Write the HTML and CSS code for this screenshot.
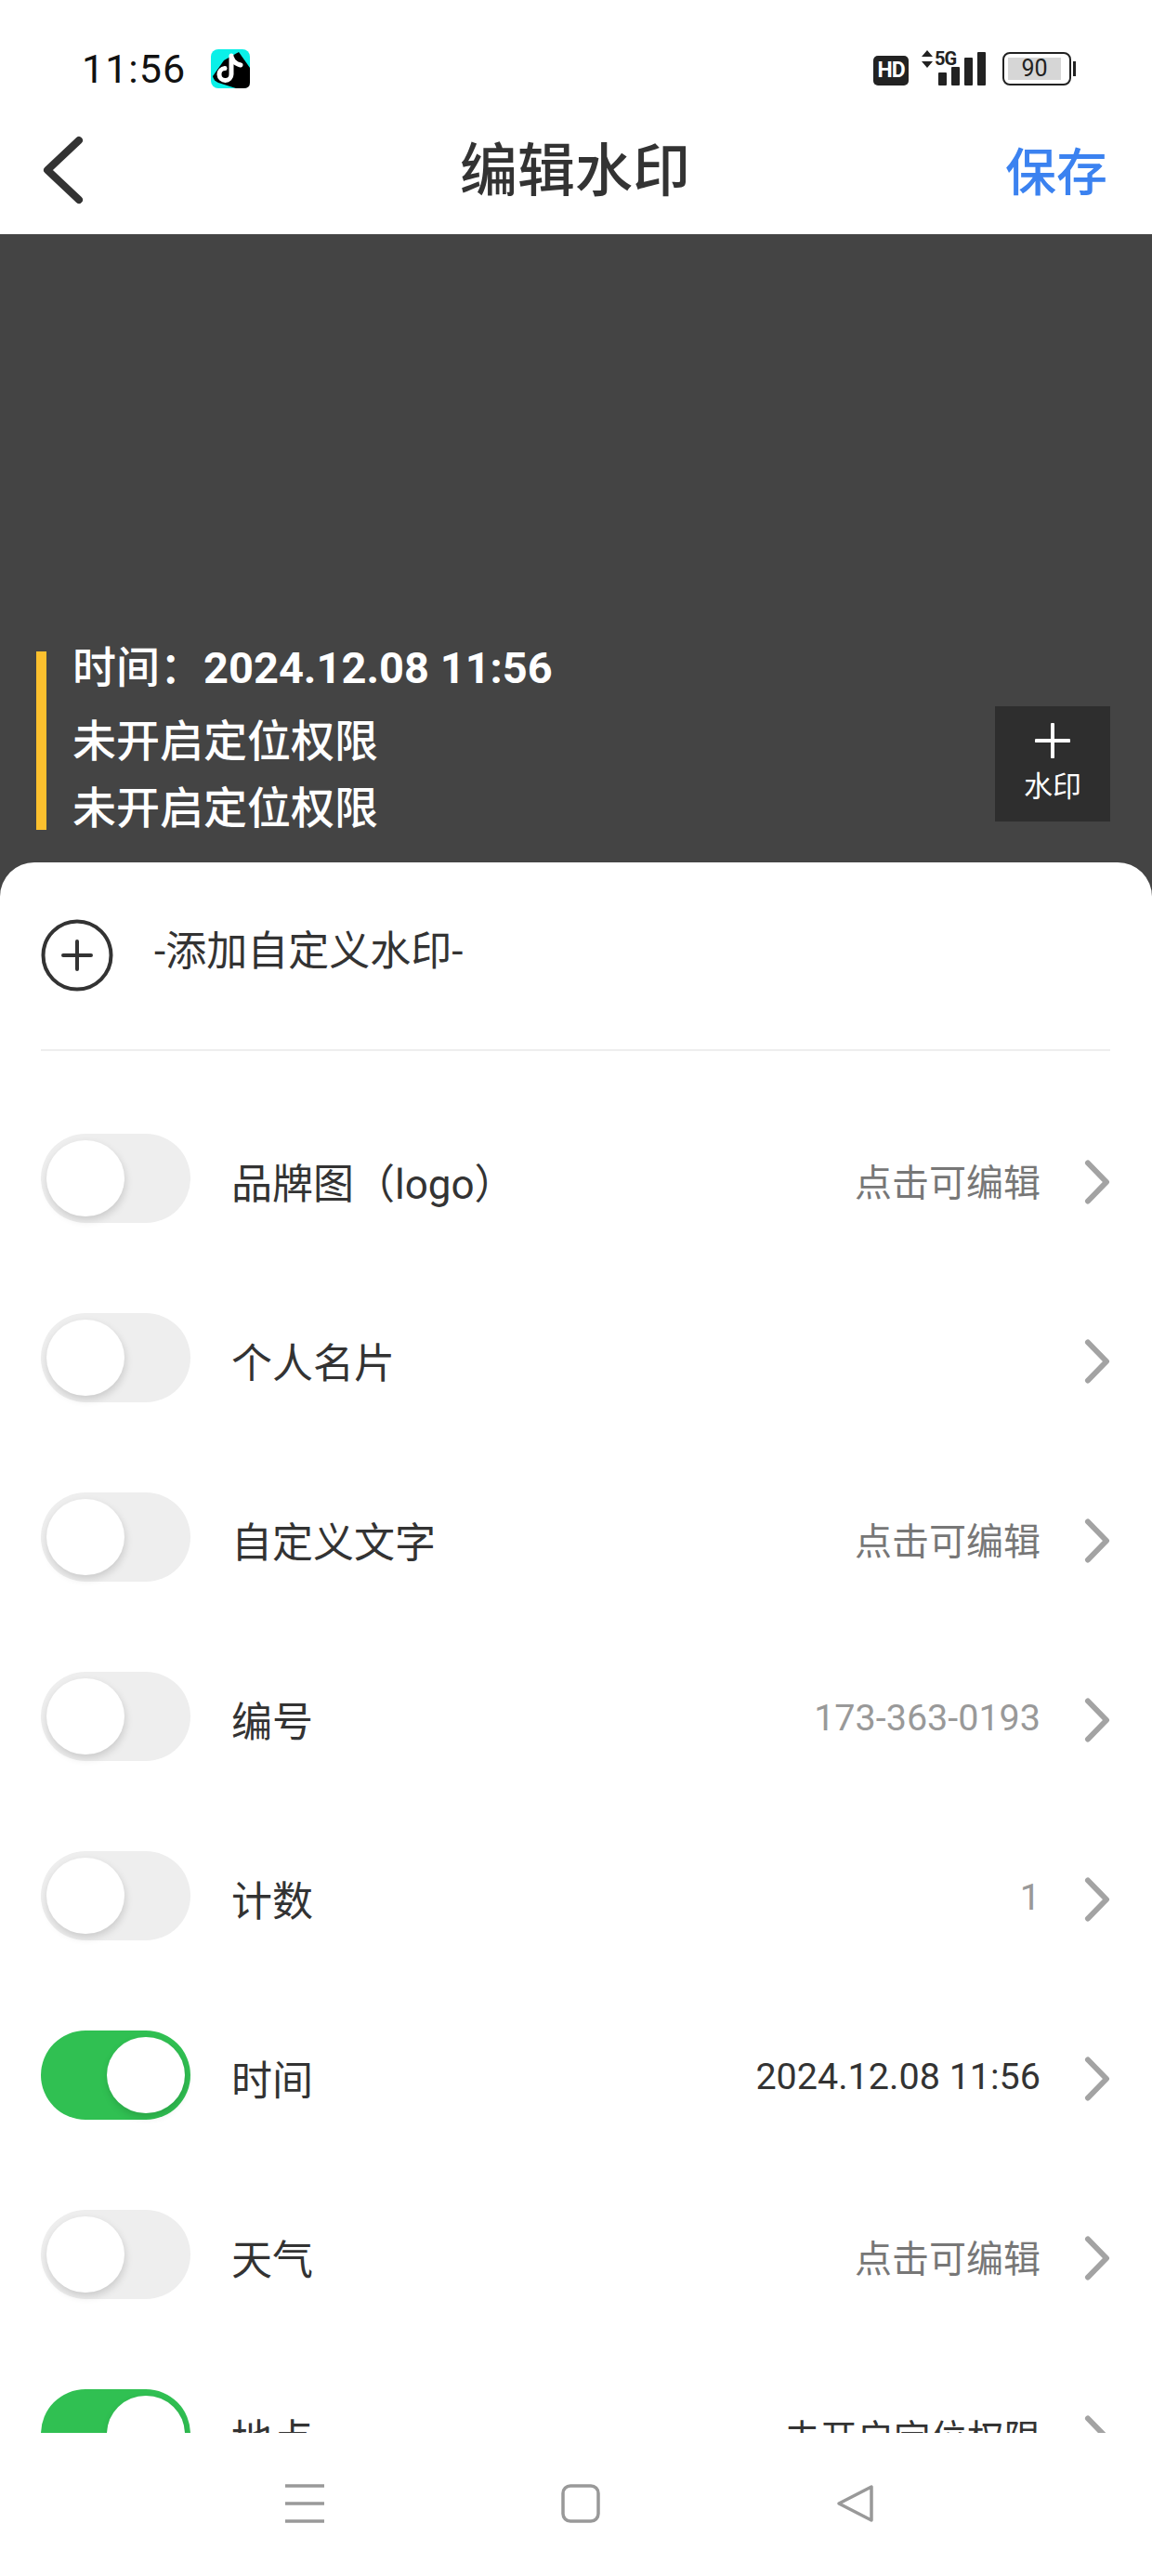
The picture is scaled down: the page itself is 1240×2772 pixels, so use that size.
FILE: index.html
```html
<!DOCTYPE html>
<html lang="zh-CN">

<head>
    <meta charset="UTF-8">
    <meta name="viewport" content="width=device-width, initial-scale=1.0">
    <title>编辑水印</title>
    <link rel="stylesheet" href="styles.css">
</head>

<body>
    <svg class="defs" width="0" height="0">
        <symbol id="chevron" viewBox="0 0 28 48">
            <path d="M4 3.5 L24 24 L4 44.5" fill="none" stroke="#a3a3a3" stroke-width="6" stroke-linecap="round" stroke-linejoin="round" />
        </symbol>
    </svg>

    <div class="phone">
        <div class="status">
            <span class="clock">11:56</span>
            <svg class="app-icon" width="42" height="42" viewBox="0 0 42 42">
                <rect width="42" height="42" rx="8" fill="#0bf0e8" />
                <path d="M2 29 L14 12 L30 3 L42 20 V36 Q42 42 35 42 H27 L8 36 Q3 34 2 29 Z" fill="#000" />
                <path d="M22 7 V27 A6.5 6.5 0 1 1 15 20.5 M22 8 Q24 15 32 17" fill="none" stroke="#fff" stroke-width="5" stroke-linecap="round" />
            </svg>
            <div class="status-right">
                <span class="hd">HD</span>
                <div class="signal">
                    <svg class="arrows" width="14" height="19" viewBox="0 0 14 19">
                        <path d="M7 0 L13 7 H1 Z M1 12 H13 L7 19 Z" fill="#222" />
                    </svg>
                    <span class="five-g">5G</span>
                    <span class="bar bar-1"></span>
                    <span class="bar bar-2"></span>
                    <span class="bar bar-3"></span>
                    <span class="bar bar-4"></span>
                </div>
                <div class="battery">
                    <div class="battery-body">
                        <span class="battery-fill">90</span>
                    </div>
                    <span class="battery-nub"></span>
                </div>
            </div>
        </div>

        <div class="header">
            <svg class="back" width="44" height="74" viewBox="0 0 44 74">
                <path d="M39 5 L5 37 L39 69" fill="none" stroke="#333" stroke-width="8" stroke-linecap="round" stroke-linejoin="round" />
            </svg>
            <h1 class="title">编辑水印</h1>
            <a class="save">保存</a>
        </div>

        <div class="preview">
            <div class="stamp">
                <p class="stamp-line"><span>时间：</span><b>2024.12.08 11:56</b></p>
                <p class="stamp-line">未开启定位权限</p>
                <p class="stamp-line">未开启定位权限</p>
            </div>
            <div class="add-stamp">
                <svg width="38" height="38" viewBox="0 0 38 38">
                    <path d="M19 1.5 V36.5 M1.5 19 H36.5" stroke="#fff" stroke-width="4" stroke-linecap="round" />
                </svg>
                <span>水印</span>
            </div>
        </div>

        <div class="sheet">
            <div class="custom">
                <svg width="78" height="78" viewBox="0 0 78 78">
                    <circle cx="39" cy="39" r="36.5" fill="none" stroke="#333" stroke-width="4" />
                    <path d="M39 24 V54 M24 39 H54" stroke="#333" stroke-width="4" stroke-linecap="round" />
                </svg>
                <span>-添加自定义水印-</span>
            </div>

            <div class="list">
                <div class="row">
                    <div class="toggle"><span class="knob"></span></div>
                    <span class="label">品牌图（logo）</span>
                    <span class="value hint">点击可编辑</span>
                    <svg class="chevron"><use href="#chevron" /></svg>
                </div>
                <div class="row">
                    <div class="toggle"><span class="knob"></span></div>
                    <span class="label">个人名片</span>
                    <span class="value"></span>
                    <svg class="chevron"><use href="#chevron" /></svg>
                </div>
                <div class="row">
                    <div class="toggle"><span class="knob"></span></div>
                    <span class="label">自定义文字</span>
                    <span class="value hint">点击可编辑</span>
                    <svg class="chevron"><use href="#chevron" /></svg>
                </div>
                <div class="row">
                    <div class="toggle"><span class="knob"></span></div>
                    <span class="label">编号</span>
                    <span class="value muted">173-363-0193</span>
                    <svg class="chevron"><use href="#chevron" /></svg>
                </div>
                <div class="row">
                    <div class="toggle"><span class="knob"></span></div>
                    <span class="label">计数</span>
                    <span class="value muted">1</span>
                    <svg class="chevron"><use href="#chevron" /></svg>
                </div>
                <div class="row">
                    <div class="toggle on"><span class="knob"></span></div>
                    <span class="label">时间</span>
                    <span class="value">2024.12.08 11:56</span>
                    <svg class="chevron"><use href="#chevron" /></svg>
                </div>
                <div class="row">
                    <div class="toggle"><span class="knob"></span></div>
                    <span class="label">天气</span>
                    <span class="value hint">点击可编辑</span>
                    <svg class="chevron"><use href="#chevron" /></svg>
                </div>
                <div class="row">
                    <div class="toggle on"><span class="knob"></span></div>
                    <span class="label">地点</span>
                    <span class="value">未开启定位权限</span>
                    <svg class="chevron"><use href="#chevron" /></svg>
                </div>
            </div>
        </div>

        <div class="nav">
            <svg width="44" height="42" viewBox="0 0 44 42">
                <path d="M1 2 H43 M1 21 H43 M1 40 H43" stroke="#999" stroke-width="3.5" />
            </svg>
            <svg width="42" height="42" viewBox="0 0 42 42">
                <rect x="2" y="2" width="38" height="38" rx="8" fill="none" stroke="#999" stroke-width="3.5" />
            </svg>
            <svg width="42" height="42" viewBox="0 0 42 42">
                <path d="M38 3 V39 L3 21 Z" fill="none" stroke="#999" stroke-width="3.5" stroke-linejoin="round" />
            </svg>
        </div>
    </div>
</body>

</html>
```

FILE: styles.css
```css
body {
    margin: 0;
    font-family: Roboto, "Noto Sans CJK SC", sans-serif;
    color: #333;
    background-color: #fff;
}

p,
h1 {
    margin: 0;
}

.defs {
    position: absolute;
}

.phone {
    width: 1240px;
    height: 2772px;
    display: flex;
    flex-direction: column;
    overflow: hidden;
}

/* status bar */
.status {
    height: 124px;
    flex: none;
    display: flex;
    align-items: center;
    padding: 24px 82px 0 88px;
    box-sizing: border-box;
}

.clock {
    font-size: 43px;
    color: #111;
    letter-spacing: 1px;
    margin-right: 27px;
}

.status-right {
    margin-left: auto;
    display: flex;
    align-items: center;
}

.hd {
    width: 38px;
    height: 32px;
    margin-top: 4px;
    border-radius: 5px;
    background-color: #222;
    color: #fff;
    font-size: 23px;
    font-weight: 700;
    line-height: 32px;
    text-align: center;
    letter-spacing: -1px;
}

.signal {
    height: 36px;
    margin-left: 13px;
    display: flex;
    align-items: flex-end;
    gap: 5px;
    position: relative;
    padding-left: 19px;
}

.arrows {
    position: absolute;
    left: 0;
    top: -2px;
}

.five-g {
    position: absolute;
    left: 15px;
    top: -5px;
    font-size: 20px;
    font-weight: 700;
    color: #222;
    letter-spacing: -1px;
}

.bar {
    width: 9px;
    border-radius: 1px;
    background-color: #222;
}

.bar-1 {
    height: 14px;
}

.bar-2 {
    height: 20px;
}

.bar-3 {
    height: 30px;
}

.bar-4 {
    height: 36px;
}

.battery {
    margin-left: 18px;
    display: flex;
    align-items: center;
    gap: 2px;
}

.battery-body {
    width: 74px;
    height: 36px;
    padding: 4px 9px 4px 4px;
    border: 2px solid #222;
    border-radius: 8px;
    box-sizing: border-box;
}

.battery-fill {
    display: block;
    height: 100%;
    background-color: #d6d6d6;
    font-size: 25px;
    line-height: 24px;
    text-align: center;
    color: #222;
}

.battery-nub {
    width: 3px;
    height: 16px;
    background-color: #222;
}

/* title bar */
.header {
    height: 128px;
    flex: none;
    display: grid;
    grid-template-columns: 1fr auto 1fr;
    align-items: center;
    padding: 0 48px 0 46px;
    box-sizing: border-box;
}

.back {
    margin-top: -10px;
}

.title {
    font-size: 62px;
    font-weight: 500;
    line-height: 1;
    margin-top: -6px;
}

.save {
    justify-self: end;
    font-size: 55px;
    font-weight: 500;
    color: #3b82f0;
    margin-top: -14px;
}

/* photo area */
.preview {
    flex: 1;
    background-color: #444;
    display: flex;
    align-items: flex-end;
    justify-content: space-between;
    padding: 0 45px 72px 39px;
    color: #fff;
}

.stamp {
    border-left: 11px solid #fcc02e;
    padding-left: 28px;
    height: 192px;
    display: flex;
    flex-direction: column;
}

.stamp-line {
    font-size: 47px;
    font-weight: 500;
    line-height: 60px;
    white-space: nowrap;
}

.stamp-line:nth-child(1) {
    margin-top: -12px;
}

.stamp-line:nth-child(2) {
    margin-top: 19px;
}

.stamp-line:nth-child(3) {
    margin-top: 12px;
}

.stamp-line b {
    font-size: 47px;
}

.add-stamp {
    width: 124px;
    height: 124px;
    margin-bottom: 9px;
    background-color: #2e2e2e;
    display: flex;
    flex-direction: column;
    align-items: center;
    padding-top: 18px;
    box-sizing: border-box;
    font-size: 31px;
    line-height: 62px;
}

/* bottom sheet */
.sheet {
    height: 1690px;
    flex: none;
    margin-top: -37px;
    background-color: #fff;
    border-radius: 37px 37px 0 0;
    overflow: hidden;
    padding: 0 45px 0 44px;
    box-sizing: border-box;
    position: relative;
}

.custom {
    height: 203px;
    display: flex;
    align-items: center;
    gap: 44px;
    font-size: 44px;
    border-bottom: 2px solid #eee;
    padding-bottom: 2px;
    box-sizing: border-box;
}

.custom span {
    margin-top: -16px;
}

.list {
    padding-top: 42px;
}

.row {
    height: 193px;
    display: flex;
    align-items: center;
}

.toggle {
    width: 161px;
    height: 96px;
    flex: none;
    padding: 7px 6px;
    box-sizing: border-box;
    border-radius: 48px;
    background-color: #eee;
    display: flex;
    margin-top: -4px;
}

.knob {
    width: 84px;
    height: 82px;
    border-radius: 50%;
    background-color: #fff;
    box-shadow: 1px 4px 8px rgba(0, 0, 0, 0.15);
}

.toggle.on {
    background-color: #30c052;
    justify-content: flex-end;
}

.label {
    margin-left: 44px;
    font-size: 44px;
    margin-top: 2px;
}

.value {
    margin-left: auto;
    font-size: 39.5px;
    color: #333;
}

.value.hint {
    font-size: 40px;
    color: #777;
}

.value.muted {
    color: #999;
}

.chevron {
    width: 28px;
    height: 48px;
    margin-left: 47px;
    margin-top: 4px;
}

/* system nav */
.nav {
    height: 154px;
    flex: none;
    background-color: #fff;
    display: flex;
    justify-content: center;
    align-items: flex-start;
    gap: 254px;
    padding: 55px 0 0 7px;
    box-sizing: border-box;
}
```
